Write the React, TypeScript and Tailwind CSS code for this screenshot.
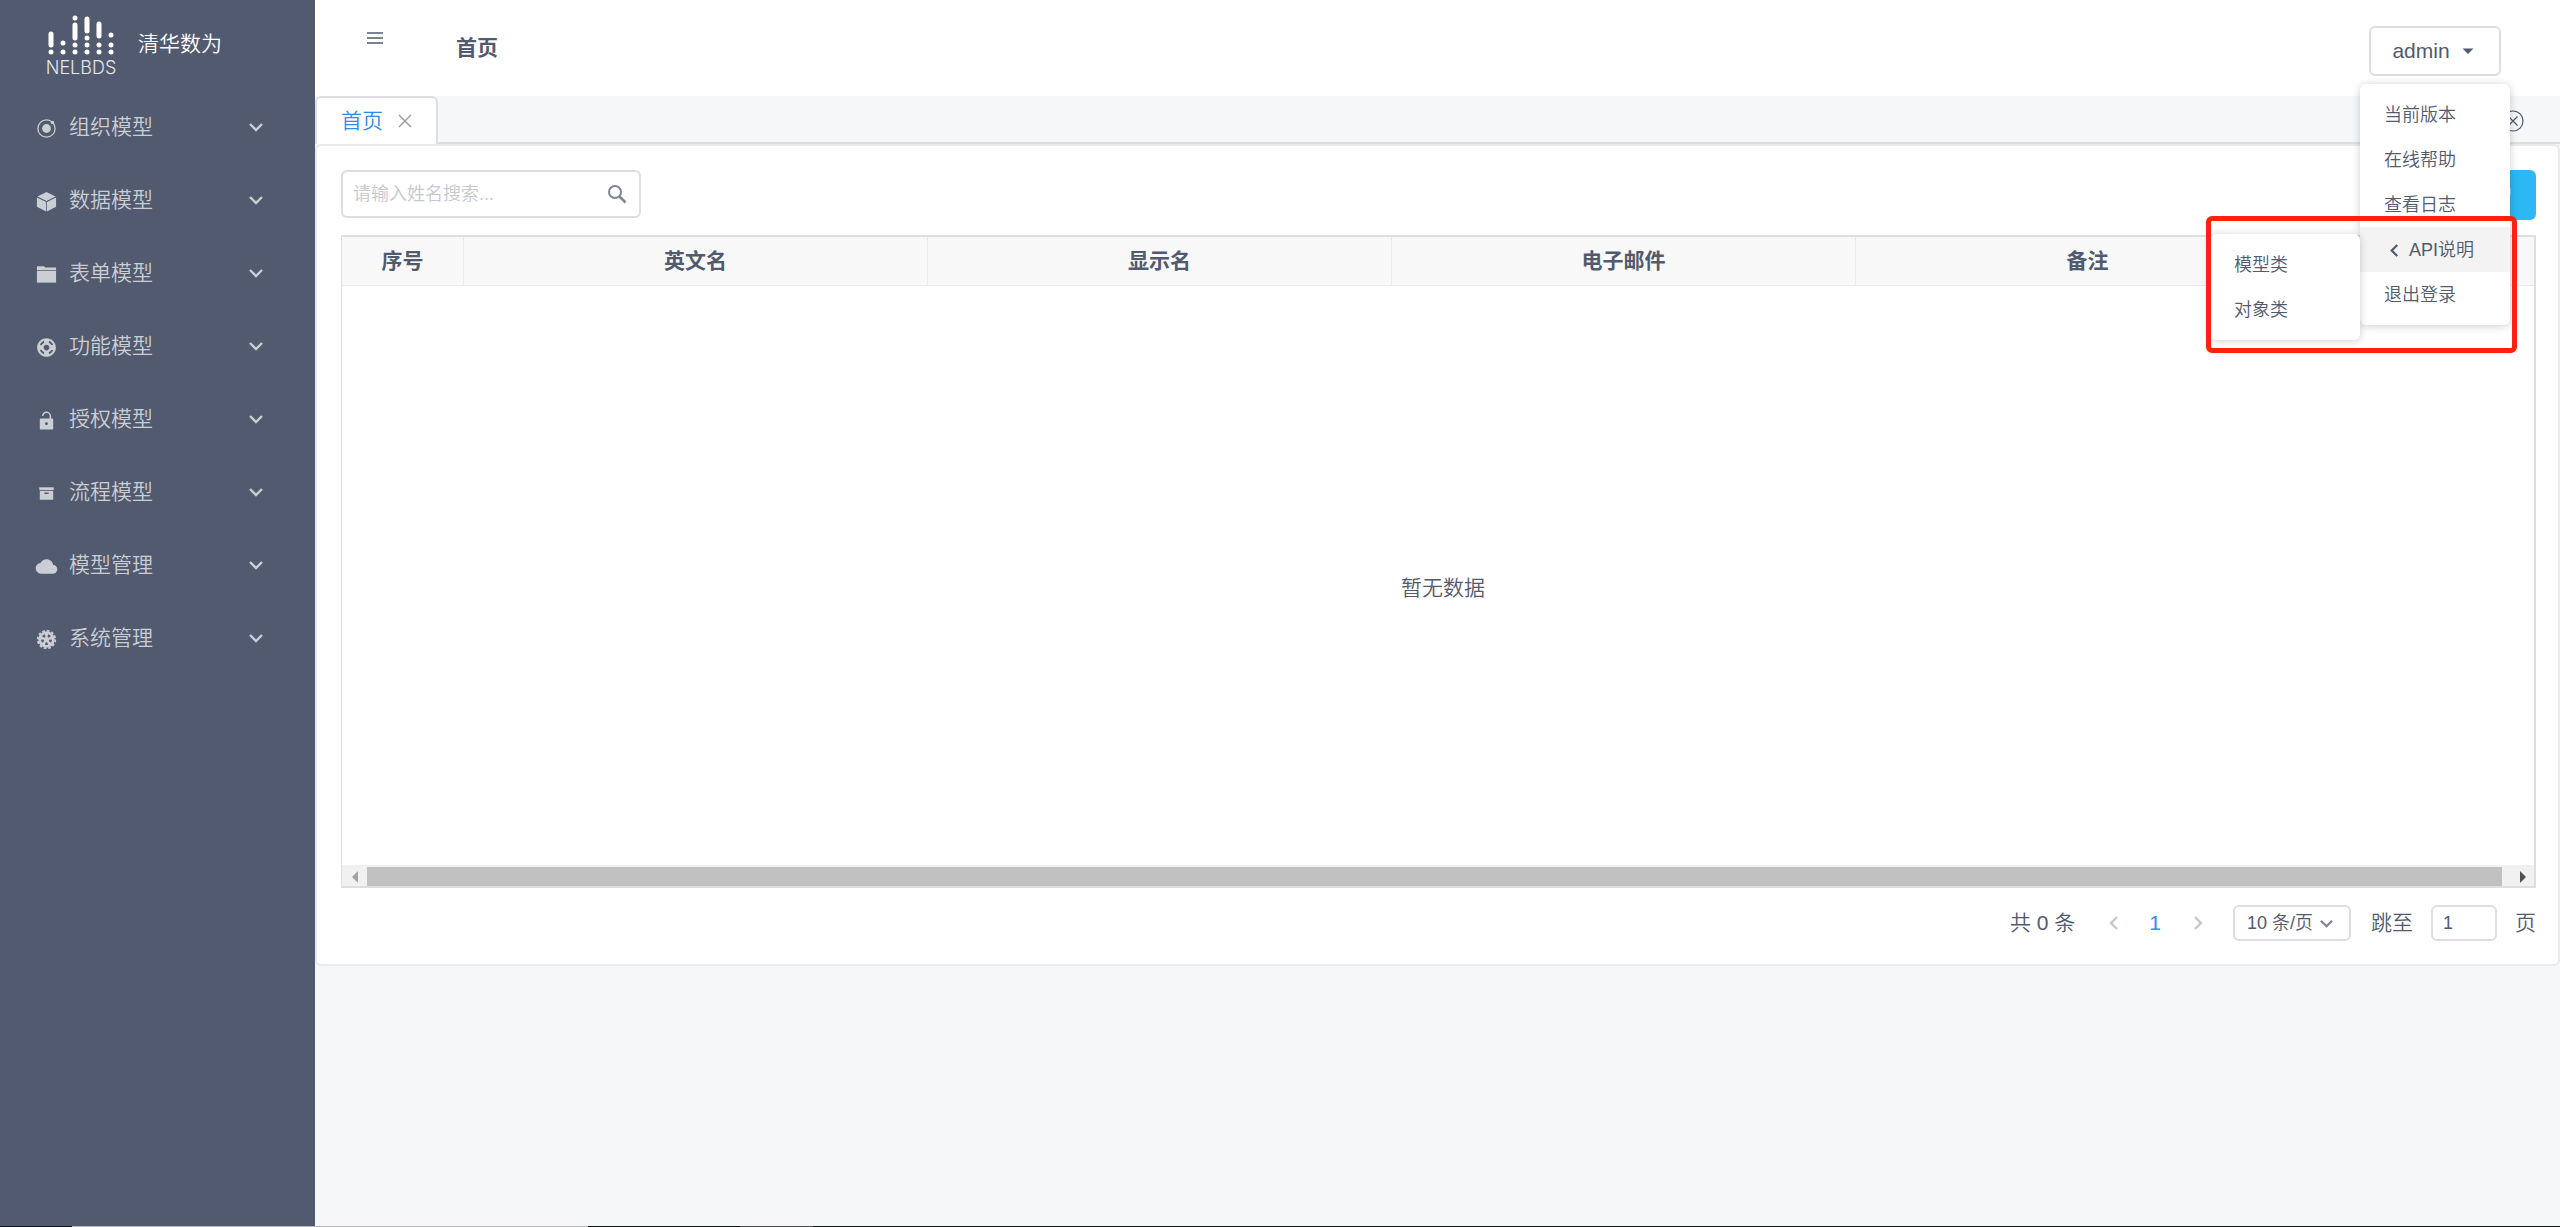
import React, { useState } from 'react';
import { IoMdHelpBuoy, IoMdCloud } from 'react-icons/io';

type IconProps = { className?: string };

type MenuItem = {
  name: string;
  icon: React.ComponentType<IconProps>;
};

function OrbitIcon({ className }: IconProps) {
  return (
    <svg viewBox="0 0 24 24" className={className} fill="none" stroke="currentColor">
      <circle cx="12" cy="12" r="9" strokeWidth="1.3" />
      <circle cx="12" cy="12" r="4.6" fill="currentColor" stroke="none" />
      <circle cx="18.2" cy="5.8" r="1.8" fill="currentColor" stroke="none" />
    </svg>
  );
}

function CubeIcon({ className }: IconProps) {
  return (
    <svg viewBox="0 0 24 24" className={className} fill="currentColor">
      <path d="M12 2 L21.5 6.800 L12 11.600 L2.500 6.800 Z" />
      <path d="M2 7.700 L11.600 12.500 V22.500 L2 17.500 Z" />
      <path d="M22 7.700 L12.400 12.500 V22.500 L22 17.500 Z" />
    </svg>
  );
}

function FolderIcon({ className }: IconProps) {
  return (
    <svg viewBox="0 0 24 24" className={className} fill="currentColor">
      <path d="M2 3.500 H9.500 L10.500 4.800 H22 V7.500 H2 Z" />
      <path d="M2 8.300 H22 V20.500 H2 Z" />
    </svg>
  );
}

function UnlockIcon({ className }: IconProps) {
  return (
    <svg viewBox="0 0 24 24" className={className} fill="none" stroke="currentColor">
      <path d="M8 7.2 A4 4 0 0 1 16 7.5 V11" strokeWidth="1.6" />
      <path
        d="M6 10 H18 Q19 10 19 11 V20.500 Q19 21.500 18 21.500 H6 Q5 21.500 5 20.500 V11 Q5 10 6 10 Z M12 13.800 A1.500 1.500 0 1 0 12 16.800 A1.500 1.500 0 1 0 12 13.800 Z"
        fill="currentColor"
        fillRule="evenodd"
        stroke="none"
      />
    </svg>
  );
}

function ArchiveIcon({ className }: IconProps) {
  return (
    <svg viewBox="0 0 24 24" className={className} fill="currentColor">
      <path d="M4.500 5.500 H19.500 V8.500 H4.500 Z" />
      <path d="M5 9.500 H19 V18.500 H5 Z M9.800 11 V12.500 H14.200 V11 Z" fillRule="evenodd" />
    </svg>
  );
}

const GEAR_HOLES = [0, 72, 144, 216, 288];

function GearIcon({ className }: IconProps) {
  return (
    <svg viewBox="0 0 24 24" className={className}>
      <circle cx="12" cy="12" r="9.2" fill="none" stroke="currentColor" strokeWidth="1.8" strokeDasharray="2.8 2.02" />
      <circle cx="12" cy="12" r="8.6" fill="currentColor" />
      {GEAR_HOLES.map(angle => (
        <path
          key={angle}
          d="M10.300 6.600 Q12 5.900 13.700 6.600 L12.700 9.200 H11.300 Z"
          fill="#515a6e"
          transform={`rotate(${angle + 36} 12 12)`}
        />
      ))}
    </svg>
  );
}

const MENU: MenuItem[] = [
  { name: '组织模型', icon: OrbitIcon },
  { name: '数据模型', icon: CubeIcon },
  { name: '表单模型', icon: FolderIcon },
  { name: '功能模型', icon: IoMdHelpBuoy },
  { name: '授权模型', icon: UnlockIcon },
  { name: '流程模型', icon: ArchiveIcon },
  { name: '模型管理', icon: IoMdCloud },
  { name: '系统管理', icon: GearIcon },
];

const COLUMNS = ['英文名', '显示名', '电子邮件', '备注'];

// x, y1, y2 of each stroke; equal y gives a dot
const LOGO_STROKES = [
  [50, 34, 45], [50, 52, 52],
  [62, 43, 43], [62, 52, 52],
  [74, 18, 18], [74, 25, 38], [74, 45, 45], [74, 52, 52],
  [86, 19, 31], [86, 38, 38], [86, 45, 45], [86, 52, 52],
  [98, 24, 36], [98, 45, 45], [98, 52, 52],
  [110, 35, 35], [110, 45, 45], [110, 52, 52],
];

function Chevron({ dir, className }: { dir: 'left' | 'right' | 'down'; className?: string }) {
  const d = {
    left: 'M10 1 L4 7 L10 13',
    right: 'M4 1 L10 7 L4 13',
    down: 'M1 4 L7 10 L13 4',
  }[dir];
  return (
    <svg viewBox="0 0 14 14" className={className} fill="none" stroke="currentColor" strokeWidth="2.4">
      <path d={d} />
    </svg>
  );
}

function Sidebar() {
  return (
    <aside className="w-[315px] shrink-0 bg-[#515a6e]">
      <div className="flex h-[90px] items-start pl-11 pt-[14px]">
        <div className="flex w-[74px] flex-col items-center">
          <svg viewBox="43 14 74 42" className="h-[42px] w-[74px]" stroke="#fff" strokeWidth="5" strokeLinecap="round">
            {LOGO_STROKES.map(([x, y1, y2], i) => (
              <line key={i} x1={x} y1={y1} x2={x} y2={y2 + 0.01} />
            ))}
          </svg>
          <span className="mt-[2px] font-['Inter'] text-[18px] leading-5 font-light text-[#e4e6ea]">NELBDS</span>
        </div>
        <span className="ml-5 pt-[14px] text-[21px] leading-8 text-white">清华数为</span>
      </div>
      <nav>
        {MENU.map(item => (
          <button key={item.name} type="button" className="flex h-[73px] w-full items-center pl-[35px] pr-[52px] text-[21px] text-[#cbced4]">
            <item.icon className="mt-1 mr-[11px] h-[23px] w-[23px]" />
            <span>{item.name}</span>
            <Chevron dir="down" className="ml-auto h-[14px] w-[14px]" />
          </button>
        ))}
      </nav>
    </aside>
  );
}

function UserMenu() {
  const itemClass = 'block h-[45px] w-full px-6 pt-[2px] text-left text-[18px] hover:bg-[#f3f3f3]';
  const panelClass = 'absolute z-10 w-[150px] rounded-md bg-white py-2 shadow-[0_1px_9px_rgba(0,0,0,0.2)]';
  return (
    <div className="relative mr-[59px] mt-[26px]">
      <button type="button" className="flex h-[50px] w-[132px] items-center justify-center gap-3 rounded-md border-2 border-[#dcdee2] pr-1 text-[21px]">
        admin
        <svg viewBox="0 0 12 8" className="h-2 w-3" fill="currentColor">
          <path d="M0.5 1.5 H11.5 L6 7 Z" />
        </svg>
      </button>
      <div className={`${panelClass} -right-[9px] top-[58px]`}>
        <button type="button" className={itemClass}>当前版本</button>
        <button type="button" className={itemClass}>在线帮助</button>
        <button type="button" className={itemClass}>查看日志</button>
        <button type="button" className="flex h-[45px] w-full items-center gap-2 bg-[#f3f3f3] pl-7 pt-[2px] text-[18px]">
          <Chevron dir="left" className="h-[13px] w-[13px]" />
          API说明
        </button>
        <button type="button" className={itemClass}>退出登录</button>
      </div>
      <div className={`${panelClass} right-[141px] top-[208px]`}>
        <button type="button" className={itemClass}>模型类</button>
        <button type="button" className={itemClass}>对象类</button>
      </div>
      <div className="pointer-events-none absolute -right-4 top-[190px] z-20 h-[137px] w-[311px] rounded-md border-[5px] border-[#ff2012]" />
    </div>
  );
}

function Header() {
  return (
    <header className="flex h-24 items-start bg-white pl-[50px]">
      <button type="button" aria-label="菜单" className="mt-[30px]">
        <svg viewBox="0 0 20 16" className="h-4 w-5" fill="none" stroke="currentColor" strokeWidth="1.5">
          <path d="M2 3 H18 M2 8 H18 M2 13 H18" />
        </svg>
      </button>
      <h1 className="ml-[71px] mr-auto mt-8 text-[21px] leading-8 font-bold">首页</h1>
      <UserMenu />
    </header>
  );
}

function TabBar() {
  return (
    <div className="flex h-12 items-stretch">
      <div className="flex w-[123px] items-center gap-[15px] rounded-t-md border-2 border-b-0 border-[#dcdee2] bg-white pl-6">
        <a href="#" className="text-[21px] text-[#2d8cf0]">首页</a>
        <button type="button" aria-label="关闭" className="text-[#999]">
          <svg viewBox="0 0 14 14" className="h-[14px] w-[14px]" stroke="currentColor" strokeWidth="1.4">
            <path d="M1 1 L13 13 M13 1 L1 13" />
          </svg>
        </button>
      </div>
      <div className="flex flex-1 items-center justify-end border-b-2 border-[#dcdee2] pr-9 pt-1">
        <button type="button" aria-label="关闭全部">
          <svg viewBox="0 0 22 22" className="h-[22px] w-[22px]" fill="none" stroke="currentColor" strokeWidth="1.2">
            <circle cx="11" cy="11" r="10" />
            <path d="M6.5 6.5 L15.5 15.5 M15.5 6.5 L6.5 15.5" />
          </svg>
        </button>
      </div>
    </div>
  );
}

function DataTable() {
  const th = 'border-b border-r border-[#e8eaec] bg-[#f8f8f9] font-bold';
  return (
    <div className="mt-[15px] border-y-2 border-l border-r-2 border-[#dcdee2]">
      <table className="w-full table-fixed border-separate border-spacing-0 text-[21px]">
        <thead>
          <tr className="h-[49px]">
            <th className={`${th} w-[122px]`}>序号</th>
            {COLUMNS.map(name => (
              <th key={name} className={`${th} w-[464px]`}>{name}</th>
            ))}
            <th className="border-b border-[#e8eaec] bg-[#f8f8f9]" />
          </tr>
        </thead>
        <tbody>
          <tr>
            <td colSpan={6} className="h-[579px] pl-[10px] pt-6 text-center">暂无数据</td>
          </tr>
        </tbody>
      </table>
      <div className="flex h-[21px] items-stretch justify-between bg-[#f1f1f1] pt-[2px]">
        <div className="flex w-[25px] items-center justify-center">
          <svg viewBox="0 0 6 12" className="h-3 w-[6px]" fill="#a3a3a3"><path d="M6 0 V12 L0 6 Z" /></svg>
        </div>
        <div className="flex-1 bg-[#c1c1c1]" />
        <div className="flex w-8 items-center justify-end pr-2">
          <svg viewBox="0 0 6 12" className="h-3 w-[6px]" fill="#505050"><path d="M0 0 V12 L6 6 Z" /></svg>
        </div>
      </div>
    </div>
  );
}

function Pagination() {
  const [page, setPage] = useState('1');
  return (
    <div className="mt-4 flex h-[38px] items-center justify-end text-[21px]">
      <span>共 0 条</span>
      <button type="button" aria-label="上一页" className="ml-8 text-[#c5c8ce]"><Chevron dir="left" className="h-[14px] w-[14px]" /></button>
      <button type="button" className="ml-7 text-[#2d8cf0]">1</button>
      <button type="button" aria-label="下一页" className="ml-[30px] text-[#c5c8ce]"><Chevron dir="right" className="h-[14px] w-[14px]" /></button>
      <div className="relative ml-7">
        <select aria-label="每页条数" className="block h-9 w-[118px] appearance-none rounded-md border-2 border-[#dcdee2] bg-white pl-3 text-[18px]">
          <option>10 条/页</option>
        </select>
        <Chevron dir="down" className="pointer-events-none absolute right-[18px] top-3 h-[13px] w-[13px] text-[#808695]" />
      </div>
      <label htmlFor="page" className="ml-5">跳至</label>
      <input
        id="page"
        value={page}
        onChange={e => setPage(e.target.value)}
        className="ml-[18px] mr-[18px] h-9 w-[66px] rounded-md border-2 border-[#dcdee2] px-[10px] text-[18px]"
      />
      <span>页</span>
    </div>
  );
}

function Content() {
  const [keyword, setKeyword] = useState('');
  return (
    <main className="rounded-md border-2 border-[#e8eaec] bg-white pb-[22px] pl-6 pr-[22px] pt-6">
      <div className="flex justify-between">
        <div className="flex h-12 w-[300px] items-center rounded-md border-2 border-[#dcdee2] pl-[10px] pr-3">
          <input
            type="text"
            aria-label="搜索"
            placeholder="请输入姓名搜索..."
            value={keyword}
            onChange={e => setKeyword(e.target.value)}
            className="min-w-0 flex-1 text-[18px] outline-none placeholder:text-[#c5c8ce]"
          />
          <svg viewBox="0 0 20 20" className="h-5 w-5 text-[#808695]" fill="none" stroke="currentColor" strokeWidth="2">
            <circle cx="8" cy="8" r="6" />
            <path d="M12.5 12.5 L18.5 18.5" strokeWidth="2.6" />
          </svg>
        </div>
        <button type="button" className="h-[50px] rounded-md bg-[#2db7f5] px-6 text-[21px] text-white">新增</button>
      </div>
      <DataTable />
      <Pagination />
    </main>
  );
}

export default function App() {
  return (
    <div className="flex min-h-screen flex-col bg-[#f5f7f9] font-['Liberation_Sans','Noto_Sans_CJK_SC',sans-serif] font-[350] text-[#515a6e]">
      <div className="flex flex-1">
        <Sidebar />
        <div className="min-w-0 flex-1">
          <Header />
          <TabBar />
          <Content />
        </div>
      </div>
      {/* taskbar edge */}
      <div className="flex h-px bg-[#0b1418]">
        <div className="ml-[72px] w-[516px] bg-[#b8b8bc]" />
        <div className="ml-[152px] w-[73px] bg-[#4a4a50]" />
      </div>
    </div>
  );
}
